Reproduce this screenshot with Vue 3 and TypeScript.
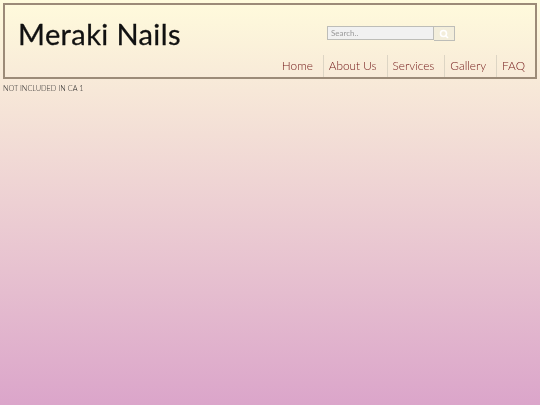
<script setup lang="ts">
const links = ["Home", "About Us", "Services", "Gallery", "FAQ"];
</script>

<template>
  <div class="page">
    <header class="header">
      <div class="top">
        <h1 class="title">Meraki Nails</h1>
        <form class="search" @submit.prevent>
          <input class="search-input" type="text" placeholder="Search.." />
          <button class="search-btn" type="submit" aria-label="Search">
            <svg width="10" height="10" viewBox="0 0 10 10" fill="none" stroke="#fff" stroke-width="1.6">
              <circle cx="4.5" cy="4.5" r="3" />
              <line x1="6.8" y1="6.8" x2="9" y2="9" />
            </svg>
          </button>
        </form>
      </div>
      <nav class="nav">
        <a v-for="link in links" :key="link" class="nav-link" href="#">{{ link }}</a>
      </nav>
    </header>
    <p class="note">NOT INCLUDED IN CA 1</p>
  </div>
</template>

<style>
html,
body {
  margin: 0;
  height: 100%;
}
</style>

<style scoped>
.page {
  box-sizing: border-box;
  width: 540px;
  height: 405px;
  padding: 3px;
  overflow: hidden;
  background: linear-gradient(to bottom, #fffbdc 0%, #dba5ca 100%);
  font-family: "Lato", "Liberation Sans", sans-serif;
}

.header {
  box-sizing: border-box;
  height: 76px;
  border: 2px solid #9c8b78;
  display: flex;
  flex-direction: column;
  justify-content: space-between;
  will-change: transform;
}

.top {
  display: flex;
  align-items: flex-start;
}

.title {
  margin: 10px 0 0 13px;
  width: 309px;
  font-size: 29px;
  line-height: 38px;
  font-weight: 400;
  letter-spacing: 0.4px;
  color: #111;
  -webkit-text-stroke: 0.3px #111;
}

.search {
  display: flex;
  margin-top: 21px;
}

.search-input {
  box-sizing: border-box;
  width: 107px;
  height: 14px;
  padding: 0 3px;
  border: 1px solid #bdbdb8;
  background: #f1f1f1;
  font-family: inherit;
  font-size: 8px;
  outline: none;
}

.search-input::placeholder {
  color: #9a9a9a;
}

.search-btn {
  box-sizing: border-box;
  width: 21px;
  height: 15px;
  padding: 0;
  border: 1px solid #bdbdb8;
  border-left: 0;
  background: #f3eedb;
  display: flex;
  align-items: center;
  justify-content: center;
}

.nav {
  display: flex;
  justify-content: flex-end;
  height: 22px;
}

.nav-link {
  padding: 0 10px 0 5px;
  border-left: 1px solid #ddd5c4;
  font-size: 11.8px;
  font-weight: 300;
  line-height: 22px;
  color: #701515;
  text-decoration: none;
}

.nav-link:first-child {
  border-left: 0;
}

.note {
  margin: 5px 0 0;
  font-size: 7.3px;
  font-weight: 300;
  line-height: 10px;
  color: #222;
  will-change: transform;
}
</style>
